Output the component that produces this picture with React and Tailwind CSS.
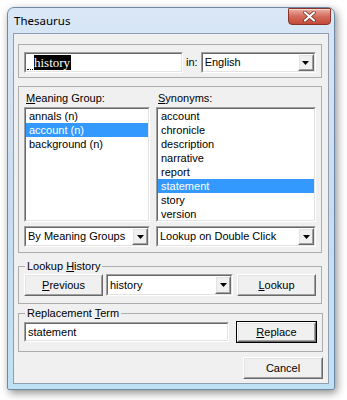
const ui = "font-['Liberation_Sans',Arial,sans-serif] text-[11px] leading-[13px] text-black";

const meanings = ['annals (n)', 'account (n)', 'background (n)'];
const synonyms = ['account', 'chronicle', 'description', 'narrative', 'report', 'statement', 'story', 'version'];

const Sunken = ({ className = '', children }) => (
  <div className={`border border-t-[#a0a0a0] border-l-[#a0a0a0] border-r-white border-b-white ${className}`}>
    <div className="h-full border border-t-[#696969] border-l-[#696969] border-r-[#e3e3e3] border-b-[#e3e3e3] bg-white overflow-hidden">
      {children}
    </div>
  </div>
);

const Raised = ({ className = '', children }) => (
  <div className={`border border-t-white border-l-white border-r-[#696969] border-b-[#696969] ${className}`}>
    <div className="h-full border border-t-[#e3e3e3] border-l-[#e3e3e3] border-r-[#a0a0a0] border-b-[#a0a0a0] bg-[#f0f0f0] flex items-center justify-center">
      {children}
    </div>
  </div>
);

const Button = ({ children, isDefault, className = '' }) =>
  isDefault ? (
    <div className={`border border-black ${className}`}>
      <Raised className="h-full">{children}</Raised>
    </div>
  ) : (
    <Raised className={className}>{children}</Raised>
  );

const Arrow = () => (
  <svg width="7" height="4" viewBox="0 0 7 4">
    <path d="M0 0h7L3.5 4z" fill="#000" />
  </svg>
);

const Combo = ({ value, className = '' }) => (
  <Sunken className={className}>
    <div className="flex h-full items-center">
      <span className="flex-1 pl-[2px] truncate">{value}</span>
      <Raised className="h-full w-[16px]">
        <Arrow />
      </Raised>
    </div>
  </Sunken>
);

const Key = ({ children }) => <span className="underline underline-offset-[1px]">{children}</span>;

const ListBox = ({ items, selected, className = '' }) => (
  <Sunken className={className}>
    {items.map((item) => (
      <div
        key={item}
        className={`h-[14px] leading-[14px] pl-[3px] ${item === selected ? 'bg-[#3399ff] text-white' : ''}`}
      >
        {item}
      </div>
    ))}
  </Sunken>
);

export default function App() {
  return (
    <div className={`w-[347px] h-[400px] bg-white pl-[7px] pt-[7px] ${ui}`}>
      <div className="w-[328px] rounded-t-[7px] rounded-b-[2px] border border-[#6f88a3] bg-gradient-to-b from-[#d9e7f6] via-[#c9dcf0] to-[#bfe1f4] shadow-[2px_3px_8px_rgba(0,0,0,0.45)]">
        {/* title bar */}
        <div className="h-[25px] flex justify-between">
          <span className="self-center pl-[6px] font-['Noto_Sans',sans-serif] text-[11.5px] text-black">Thesaurus</span>
          <div className="mr-[3px] w-[43px] h-[17px] rounded-b-[4px] rounded-t-[1px] border border-[#8a3328] bg-gradient-to-b from-[#eab1a4] via-[#d46a5b] to-[#c24a3a] flex items-center justify-center shadow-[inset_0_1px_0_rgba(255,255,255,0.5)]">
            <svg width="13" height="11" viewBox="0 0 13 11">
              <path d="M2 1.5l9 8M11 1.5l-9 8" stroke="#6b2a22" strokeWidth="3.6" strokeLinecap="round" />
              <path d="M2 1.5l9 8M11 1.5l-9 8" stroke="#fff" strokeWidth="2.2" strokeLinecap="round" />
            </svg>
          </div>
        </div>

        {/* client area */}
        <div className="mx-[5px] border border-[#8f9fb2] bg-[#f0f0f0] pl-[4px] pr-[6px] pt-[10px] pb-[4px]">
          {/* search */}
          <div className="h-[34px] border border-[#adadad] pl-[5px] pt-[7px] flex items-start">
            <Sunken className="w-[159px] h-[21px]">
              <div className="flex h-full items-center pl-[1px]">
                <span className="self-end mb-[1px] w-[6px] border-b border-dotted border-black" />
                <span className="ml-[1px] bg-black text-white [font-family:'Liberation_Serif','Times_New_Roman',serif] text-[13px] leading-[15px] pr-[1px]">
                  history
                </span>
              </div>
            </Sunken>
            <span className="mx-[3px] h-[21px] leading-[21px]">in:</span>
            <Combo value="English" className="w-[115px] h-[21px]" />
          </div>

          {/* meaning / synonyms */}
          <div className="mt-[8px] h-[167px] border border-[#adadad] px-[5px] pt-[5px] flex gap-[6px]">
            <div className="w-[126px]">
              <div className="ml-[2px] h-[13px]">
                <Key>M</Key>eaning Group:
              </div>
              <ListBox items={meanings} selected="account (n)" className="mt-[2px] h-[115px]" />
              <Combo value="By Meaning Groups" className="mt-[4px] h-[21px]" />
            </div>
            <div className="w-[160px]">
              <div className="ml-[2px] h-[13px]">
                <Key>S</Key>ynonyms:
              </div>
              <ListBox items={synonyms} selected="statement" className="mt-[2px] h-[115px]" />
              <Combo value="Lookup on Double Click" className="mt-[4px] h-[21px]" />
            </div>
          </div>

          {/* lookup history */}
          <fieldset className="mt-[7px] border border-[#adadad] px-[5px] pb-[7px]">
            <legend className="ml-[1px] px-[2px] leading-[13px]">
              Lookup <Key>H</Key>istory
            </legend>
            <div className="mt-[1px] flex items-center">
              <Button className="w-[79px] h-[22px]">
                <Key>P</Key>revious
              </Button>
              <Combo value="history" className="ml-[3px] w-[127px] h-[22px]" />
              <Button className="ml-[4px] w-[79px] h-[22px]">
                <Key>L</Key>ookup
              </Button>
            </div>
          </fieldset>

          {/* replacement term */}
          <fieldset className="mt-[3px] border border-[#adadad] px-[5px] pb-[8px]">
            <legend className="ml-[1px] px-[2px] leading-[13px]">
              Replacement <Key>T</Key>erm
            </legend>
            <div className="mt-[1px] h-[22px] flex items-center">
              <Sunken className="w-[205px] h-[20px]">
                <div className="h-full flex items-center pl-[2px]">statement</div>
              </Sunken>
              <Button isDefault className="ml-[7px] w-[81px] h-[22px]">
                <Key>R</Key>eplace
              </Button>
            </div>
          </fieldset>

          <div className="mt-[5px] flex justify-end">
            <Button className="mr-[-1px] w-[80px] h-[22px]">Cancel</Button>
          </div>
        </div>
        <div className="h-[5px]" />
      </div>
    </div>
  );
}
